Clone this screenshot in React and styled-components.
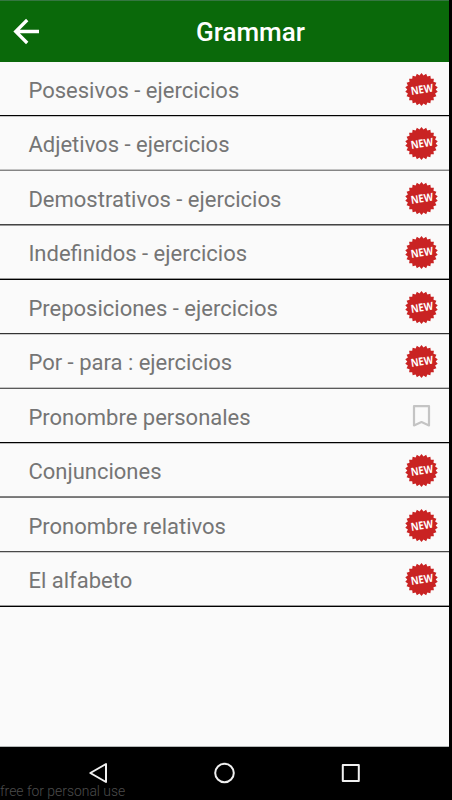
import React from "react";
import styled, { createGlobalStyle } from "styled-components";

const Global = createGlobalStyle`
  * { box-sizing: border-box; }
  html, body { margin: 0; background: #000; }
  body { font-family: Roboto, sans-serif; }
`;

const Device = styled.div`
  width: 452px;
  height: 800px;
  padding-right: 3px;
  background: #000;
  overflow: hidden;
  display: flex;
  flex-direction: column;
`;

const Header = styled.header`
  flex: none;
  height: 62px;
  display: grid;
  grid-template-columns: 52px 1fr;
  align-items: center;
  background: #0a690a;
  border-top: 1px solid #357641;
  color: #fff;
`;

const BackButton = styled.button`
  all: unset;
  width: 52px;
  height: 61px;
  display: block;
  svg { display: block; }
`;

const Title = styled.h1`
  margin: 1px 0 0;
  text-align: center;
  font-size: 26px;
  line-height: 30px;
  font-weight: 500;
`;

const Content = styled.main`
  flex: none;
  height: 685px;
  background: #fafafa;
  border-bottom: 1px solid #b4b8b8;
`;

const List = styled.ul`
  list-style: none;
  margin: 0;
  padding: 0;
`;

const Row = styled.li`
  height: ${(p) => p.$height}px;
  display: flex;
  align-items: flex-start;
  justify-content: space-between;
  padding: 0 11px 0 28.4px;
  border-bottom: 1px solid ${(p) => p.$line};
  box-shadow: ${(p) => (p.$height === 55 ? "inset 0 -1px 0" : "0 1px 0")} ${(p) => p.$edge};
`;

const Label = styled.span`
  margin-top: 14px;
  font-size: 22px;
  line-height: 30px;
  color: #757575;
  white-space: nowrap;
`;

const IconSlot = styled.span`
  width: 33px;
  height: 33px;
  margin-top: 10.5px;
  svg { display: block; }
`;

const NavBar = styled.nav`
  flex: none;
  height: 53px;
  display: grid;
  grid-template-columns: 1fr;
  grid-template-rows: 53px;
  > * { grid-area: 1 / 1; }
  svg { display: block; }
`;

const Watermark = styled.span`
  align-self: end;
  font-size: 13.9px;
  line-height: 18px;
  font-weight: 300;
  color: #4c4c4c;
`;

const points = Array.from({ length: 44 }, (_, i) => {
  const a = (i * Math.PI) / 22;
  const r = i % 2 ? 14.2 : 16.4;
  return `${(16.5 + r * Math.sin(a)).toFixed(2)},${(16.5 - r * Math.cos(a)).toFixed(2)}`;
}).join(" ");

const NewBadge = () => (
  <svg width="33" height="33" viewBox="0 0 33 33">
    <polygon points={points} fill="#c92323" />
    <text x="16.9" y="20.4" textAnchor="middle" fill="#fff" fontFamily="Open Sans" fontWeight="700" fontSize="11" textLength="22.4" lengthAdjust="spacingAndGlyphs" transform="rotate(-9 16.5 16.5)">NEW</text>
  </svg>
);

const Bookmark = () => (
  <svg width="33" height="33" viewBox="0 0 33 33" fill="none" stroke="#c4c4c4" strokeWidth="2.2" strokeLinejoin="round">
    <path d="M9 6.2H24V25.4L16.5 22.1L9 25.4Z" />
  </svg>
);

const items = [
  ["Posesivos - ejercicios", 54, "#000", "#c4c4c4"],
  ["Adjetivos - ejercicios", 55, "#858585", "#c4c4c4"],
  ["Demostrativos - ejercicios", 54, "#444", "#999"],
  ["Indefinidos - ejercicios", 55, "#000", "#999"],
  ["Preposiciones - ejercicios", 54, "#333", "#ccc"],
  ["Por - para : ejercicios", 55, "#5a5a5a", "#c4c4c4"],
  ["Pronombre personales", 54, "#000", "#bbb", true],
  ["Conjunciones", 55, "#777", "#808080"],
  ["Pronombre relativos", 54, "#484848", "#ccc"],
  ["El alfabeto", 55, "#000", "#999"],
];

export default function App() {
  return (
    <>
      <Global />
      <Device>
        <Header>
          <BackButton aria-label="Back">
            <svg width="52" height="61" viewBox="0 0 52 61" fill="none" stroke="#fff" strokeWidth="3.3">
              <path d="M39 30.5H16M27.2 19L15.7 30.5L27.2 42" />
            </svg>
          </BackButton>
          <Title>Grammar</Title>
        </Header>
        <Content>
          <List>
            {items.map(([label, height, line, edge, saved]) => (
              <Row key={label} $height={height} $line={line} $edge={edge}>
                <Label>{label}</Label>
                <IconSlot>{saved ? <Bookmark /> : <NewBadge />}</IconSlot>
              </Row>
            ))}
          </List>
        </Content>
        <NavBar>
          <svg width="449" height="53" viewBox="0 0 449 53" fill="none" stroke="#f0f0f0" strokeWidth="2" strokeLinejoin="round">
            <path d="M106 17V35L90.3 26Z" />
            <circle cx="224.5" cy="26" r="9.3" />
            <rect x="342.8" y="18" width="16" height="16" />
          </svg>
          <Watermark>free for personal use</Watermark>
        </NavBar>
      </Device>
    </>
  );
}
